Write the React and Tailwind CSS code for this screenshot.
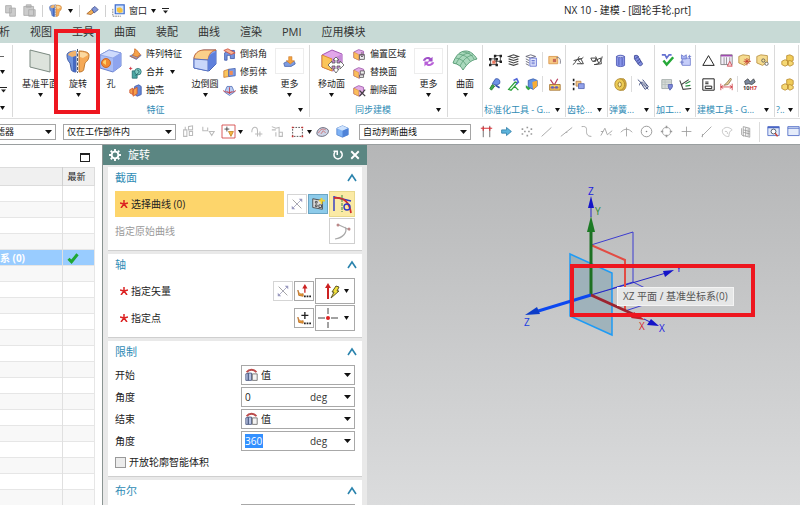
const FONT = "font-['Open_Sans','Noto_Sans_CJK_SC',sans-serif]";

const Svg = ({ size = 14, box = 16, children }) => (
  <svg width={size} height={size} viewBox={`0 0 ${box} ${box}`} fill="none" className="shrink-0 overflow-visible" aria-hidden="true">
    {children}
  </svg>
);

const Arrow = ({ wide }) => (
  <svg width={wide ? 7 : 5} height="4" viewBox="0 0 6 4" preserveAspectRatio="none" className="shrink-0" aria-hidden="true">
    <path d="M0 0h6L3 4z" fill="#111" />
  </svg>
);

const OverflowArrow = () => (
  <svg width="7" height="6" viewBox="0 0 7 6" className="shrink-0" aria-hidden="true">
    <path d="M0 0h7v1H0zM1 2.5h5L3.500 5.500z" fill="#222" />
  </svg>
);

/* ---------- ribbon drawings ---------- */

const RevolveArt = () => (
  <>
    <path d="M1 6c0-3 5-4 9-4v21c-3 0-5-1-5-4l-1-5c-2-2-3-4-3-8z" fill="#6f93dd" stroke="#4660a8" />
    <path d="M2 6c1-3 4-4 8-4v5L6 8z" fill="#f0b26c" />
    <path d="M10 7v16c-1 0-2 0-3-1V8z" fill="#4568c0" />
    <path d="M13 2c5 0 10 1 10 4 0 5-2 6-4 8l-1 5c0 3-2 4-5 4z" fill="#f5a956" stroke="#c07a32" />
    <path d="M14 3c4 0 7 1 8 3l-5 3-3-1z" fill="#fbd9a0" />
    <path d="M11.500 0v24" stroke="#4c5a70" strokeDasharray="3 1.500" />
  </>
);

const BIG_ART = {
  plane: <path d="M2 1l20 5v17L2 18z" fill="#dde3dc" stroke="#7b8980" />,
  revolve: <RevolveArt />,
  hole: (
    <>
      <path d="M1 6l9-5 12 3v13l-8 6-13-4z" fill="#a9bdf5" stroke="#6b83cf" />
      <path d="M1 6l13 3 8-5-12-3z" fill="#cfdbfd" stroke="#8298dd" strokeWidth=".7" />
      <path d="M14 9v14l8-6V4z" fill="#8ea4ee" />
      <circle cx="7" cy="14" r="4.500" fill="#f28b30" stroke="#c9652c" />
      <path d="M4 14a3 3 0 013-3v5z" fill="#ffd26a" />
    </>
  ),
  edge: (
    <>
      <path d="M1 10c0-5 4-8 10-9h12v14l-7 7-15-3z" fill="#86a3ec" stroke="#4864b4" />
      <path d="M1 10C1 5 5 1 11 1h12c-5 1-7 4-8 10z" fill="#fbd08a" stroke="#d0703c" />
      <path d="M1 10l14 1v11L1 19z" fill="#c9d7fa" stroke="#5873c4" />
      <path d="M15 11c0-5 4-7 8-8v12l-8 7z" fill="#5f80db" />
    </>
  ),
  moveFace: (
    <>
      <path d="M2 6l10-5 10 4v11l-9 6-11-4z" fill="#e2a6ea" stroke="#a355b5" />
      <path d="M2 6l10 4v12L2 18z" fill="#fbc55a" stroke="#db8b32" />
      <path d="M12 10l10-5v11l-9 6z" fill="#c689d8" />
      <path d="M16 8l3 3h-2v3h3v-2l4 4-4 4v-3h-3v3h2l-3 4-3-4h2v-3h-3v3l-4-4 4-4v2h3v-3h-2z" fill="#fff" stroke="#555" strokeWidth=".8" />
    </>
  ),
  surface: (
    <>
      <path d="M0 14C3 6 7 2 13 2c4 0 8 3 11 8-6 1-10 5-14 11-2-4-5-6-10-7z" fill="#a9d8bc" stroke="#5c9f79" />
      <path d="M3 15C6 8 11 4 17 4M7 17c3-6 7-10 13-11M3 9c5 1 8 3 10 7M6 5c5 1 9 3 11 7M10 3c5 0 9 3 11 7" stroke="#5c9f79" strokeWidth=".8" />
    </>
  ),
};

const CubeBase = () => (
  <>
    <path d="M1 5l6-3 6 2v7l-5 4-7-3z" fill="#e2abe6" stroke="#9a55a8" />
    <path d="M1 5l6 3v7l-6-3z" fill="#fbbd5c" stroke="#c98232" strokeWidth=".6" />
  </>
);

const SMALL_ART = {
  pattern: (
    <>
      <path d="M1 10l6-3 8 2-6 5z" fill="#88a5e6" stroke="#5270b8" />
      <path d="M7 1c3 1 4 4 7 7l-4 3-6-2c3-2 3-5 3-8z" fill="#f5a24a" stroke="#cb6b28" />
      <path d="M1 10l8 3 5-4" stroke="#d26f32" />
    </>
  ),
  unite: (
    <>
      <path d="M4 6h6v9H4z" fill="#4aa8a4" stroke="#256c70" />
      <circle cx="11" cy="7" r="4" fill="#7dcac2" stroke="#256c70" />
      <path d="M10 5a2 2 0 012 3l-4 4" stroke="#205b60" />
      <path d="M0 3h4M2 1v4" stroke="#d2303c" />
    </>
  ),
  shell: (
    <>
      <path d="M7 3l5-2 3 2v10l-5 2-4-3z" fill="#6587da" stroke="#3c58a5" />
      <path d="M1 7l4-2v8l-4-2zM5 7l5-3v8l-5 3z" fill="#f7a04b" stroke="#cc5832" />
    </>
  ),
  chamfer: (
    <>
      <path d="M2 6l5-3h7v10H9V9H5v6H2z" fill="#7594df" stroke="#3d58a8" />
      <path d="M1 3l9 5 5-2-9-5z" fill="#f6b494" stroke="#cc4d3d" />
    </>
  ),
  trim: (
    <>
      <path d="M1 6l6-2v9l-6 1z" fill="#fac55c" stroke="#cc7a35" />
      <path d="M7 4l8-1v9l-8 1z" fill="#7e9ce6" stroke="#4461ae" />
      <path d="M8 6h4v5H8z" fill="#f08c54" />
    </>
  ),
  draft: (
    <>
      <path d="M5 3h6l3 7-6 4-6-4z" fill="#b9ccf5" stroke="#5570b5" />
      <path d="M0 8c3 3 13 3 16 0M8 4v8M5 9l3 3 3-3" stroke="#c03c44" />
    </>
  ),
  offset: (
    <>
      <CubeBase />
      <path d="M8 8h6v6H8zM11 5v6M9 9l2 2 2-2" fill="#eee" stroke="#555" />
    </>
  ),
  replace: (
    <>
      <CubeBase />
      <path d="M9 6h5v4H9zM8 11h5v3H8z" fill="#eee" stroke="#555" />
    </>
  ),
  remove: (
    <>
      <CubeBase />
      <path d="M8 8l7 7M15 7l-7 8" stroke="#444" strokeWidth="1.500" />
    </>
  ),
  moreOrange: (
    <>
      <path d="M1 10l4-2h9l1 3-5 3H2z" fill="#7e9ce0" stroke="#4a66ae" />
      <path d="M7 2h4v5h3l-5 4-5-4h3z" fill="#f5a33c" stroke="#c8762a" strokeWidth=".7" />
    </>
  ),
  morePurple: (
    <>
      <path d="M1 7c1-5 8-6 10-3l2-2v6H7l2-2C7 4 5 5 4 7z" fill="#a050c8" />
      <path d="M15 9c-1 5-8 6-10 3l-2 2V8h6l-2 2c2 2 4 1 5-1z" fill="#b860d8" />
    </>
  ),
};

const TOOL_ART = {
  nodes: (
    <>
      <path d="M2 6h7v7H2zM7 2h7v7H7z" stroke="#333" />
      <path d="M0 5h3v3H0zM8 5h3v3H8zM0 12h3v3H0zM8 12h3v3H8zM6 1h3v3H6zM13 1h3v3h-3zM13 8h3v3h-3z" fill="#222" />
      <path d="M4 8h4v4H4z" fill="#e8745a" />
    </>
  ),
  layers: <path d="M2 3l6-2 6 2-6 2zM2 6l6 2 6-2M2 9l6 2 6-2M2 12l6 2 6-2" stroke="#444" strokeWidth="1.300" />,
  sheets: (
    <>
      <path d="M1 3l6-2 6 2-6 2zM1 6l4 2M1 9l4 2M1 12l4 2" stroke="#556" />
      <path d="M6 5h8v10H6z" fill="#e4e8fd" stroke="#5765cb" />
      <path d="M8 8h4M8 10h4M8 12h4" stroke="#5765cb" />
    </>
  ),
  tag: (
    <>
      <path d="M1 3h11v9H1z" fill="#f7c983" stroke="#d79348" />
      <path d="M10 5c4-2 6 1 5 7" stroke="#667" />
      <path d="M6 6h4v4H6z" fill="#c86a58" />
    </>
  ),
  wrench: (
    <>
      <path d="M8 1c5-1 6 3 5 6l-4 2-5-2z" fill="#6f93e6" stroke="#3450a5" />
      <path d="M4 8l3 2-4 5-2-2z" fill="#41ad4b" stroke="#246b30" />
      <path d="M8 9l5 3" stroke="#3450a5" strokeWidth="2" />
    </>
  ),
  wrenchPen: (
    <>
      <path d="M2 14l8-9 3 1-8 9zM9 10l5 5" fill="#fff" stroke="#2ba03a" strokeWidth="1.500" />
      <path d="M8 3l4-2 2 4-3 3" stroke="#5568d8" strokeWidth="2" />
    </>
  ),
  wrenchCube: (
    <>
      <path d="M4 3l6-2 5 2v7l-5 4-6-3z" fill="#6294e6" stroke="#355aa8" />
      <path d="M9 5l6-2v7l-5 4z" fill="#f8ae36" />
      <path d="M1 9l6 4-3 2-3-3z" fill="#36a845" />
    </>
  ),
  toolbox: (
    <>
      <path d="M2 8h13v7H2z" fill="#f4ce62" stroke="#a06a28" />
      <path d="M3 2l4 6M12 1L8 8M3 12h10" stroke="#b73c5b" strokeWidth="1.500" />
      <path d="M4 10h3v3H4zM9 10h3v3H9z" fill="#5564c8" />
    </>
  ),
  gearA: <path d="M1 13c3-1 3-4 5-6 3-2 6 0 8-3M2 8l9-2 3 6H6M9 3c-3 3-1 6 3 9" stroke="#444" strokeWidth="1.200" />,
  gearB: <path d="M1 5h6v4H3zM5 13c6 0 9-4 10-10M4 9l9-4 1 7-8 1M7 3l4 9" stroke="#444" strokeWidth="1.200" />,
  gearList: (
    <>
      <path d="M2 1v3M2 6v3M2 12v3" stroke="#222" strokeWidth="2" />
      <path d="M5 4h6v6H5z" fill="#f3c98a" stroke="#b98045" />
      <path d="M8 7h7v6H8z" fill="#93a2ea" stroke="#5464b4" />
    </>
  ),
  cylinder: <path d="M3 3c2-2 8-2 10 0v11c-2 2-8 2-10 0zM3 3c2 2 8 2 10 0M6 5v9M10 5v9" fill="#8794e8" stroke="#4a55b0" />,
  spring: <path d="M3 2c3-1 5 0 5 2l5 8c-1 3-4 3-5 1L3 6zM4 6l4-3M6 9l4-3M7 12l4-3" fill="#7e8bde" stroke="#38428f" />,
  torus: (
    <>
      <path d="M7 1h5c4 3 4 11 0 14H7z" fill="#d8b040" stroke="#a8812a" />
      <ellipse cx="7" cy="8" rx="6" ry="7" fill="#eccb55" stroke="#a8812a" />
      <ellipse cx="7" cy="8" rx="2" ry="3" fill="#fff2b8" stroke="#8a6a20" />
    </>
  ),
  springCut: <path d="M1 2l13 12M3 9c0-3 3-5 5-3s3 5 5 3M4 5l6 9 4-3-7-9" stroke="#445080" strokeWidth="1.200" />,
  check: (
    <>
      <path d="M1 1h4l2 4 3-4h3" stroke="#6470d0" strokeWidth="2" />
      <path d="M3 8l4 5 8-9" stroke="#26a838" strokeWidth="3" />
    </>
  ),
  parts: (
    <>
      <path d="M4 5h10v9H4z" fill="#c5cdf9" stroke="#7480cf" />
      <path d="M3 1l3 2 3-2v5H3z" fill="#a9b5f3" stroke="#6c79cb" />
      <path d="M11 3h4M13 1v5M1 10h5M3 8v5" stroke="#6c79cb" />
    </>
  ),
  sheetPin: (
    <>
      <path d="M1 2h12v11H1z" fill="#d6dbd8" stroke="#9aa4a1" />
      <path d="M1 5h12M1 8h8M5 2v11" stroke="#b8c0bd" />
      <path d="M9 8h5v3l-3 4-2-4z" fill="#7d88d8" stroke="#515cb0" />
    </>
  ),
  axes: (
    <>
      <path d="M1 3l4 11 10-1M5 14l-2-6 9-6" stroke="#444" strokeWidth="1.300" />
      <path d="M8 7l6-3M8 10l6-1" stroke="#2c9146" strokeWidth="1.500" />
    </>
  ),
  triangle: <path d="M8 2l7 12H1z" stroke="#222" strokeWidth="1.200" />,
  tableRed: (
    <>
      <path d="M1 1h14v12H1z" fill="#f5f0fa" stroke="#777" />
      <path d="M1 2h14" stroke="#a04ab0" strokeWidth="2" />
      <path d="M5 4v9M8 4v9M12 4v9" stroke="#888" />
      <path d="M12 9l3 6H9z" fill="#fbd5d8" stroke="#d04550" />
    </>
  ),
  boxStar: (
    <>
      <path d="M1 3l5-2 8 1v8l-6 4-7-3z" fill="#f6dc90" stroke="#b58d3c" />
      <path d="M11 5v9M7 9h9M8 6l6 6M14 6l-6 6" stroke="#c2382f" />
    </>
  ),
  boxGear: (
    <>
      <path d="M1 3l5-2 8 1v8l-6 4-7-3z" fill="#f6dc90" stroke="#b58d3c" />
      <circle cx="9" cy="8" r="2" stroke="#555" />
      <circle cx="13" cy="12" r="2" fill="#fff" stroke="#555" />
    </>
  ),
  frame: <path d="M1 1h14v14H1zM4 10h8v3H4zM4 5h4M4 7h4" stroke="#222" strokeWidth="1.200" />,
  dimension: (
    <>
      <path d="M1 7v8M15 7v8M1 11h14M4 9l-3 2 3 2M12 9l3 2-3 2" stroke="#cf3a40" />
      <path d="M13 0L9 5l-4 4 5-1 4-6z" fill="#e9cf92" stroke="#8a7750" />
    </>
  ),
  fit: (
    <>
      <path d="M2 4l4-3 3 4 4-4 2 4-4 3-4-1-4 1z" fill="#7c8aa0" stroke="#444" />
      <text x="0" y="15" fontSize="7" fontWeight="700" fill="#333">10<tspan fill="#c33">H7</tspan></text>
    </>
  ),
  gold: (
    <>
      <path d="M7 2l4-1 4 2v5l-4 2-4-2z" fill="#f0cb58" stroke="#b98a2c" />
      <path d="M1 9l4-2 4 2v4l-4 2-4-2zM8 9l3-1 4 2v3l-4 2-3-2z" fill="#f6d873" stroke="#b98a2c" />
    </>
  ),
};

/* ---------- selection bar drawings ---------- */

const BAR_ART = {
  cubesGrey: <path d="M2 6h4v8H2zM8 2l5-1v5H8zM9 8h4v5H9zM4 2v4" stroke="#bbb" strokeWidth="1.300" />,
  filterGrey: <path d="M1 2v5h6V3M9 8h6l-3 5z" stroke="#bbb" strokeWidth="1.300" />,
  plusBox: (
    <>
      <path d="M0 0h16v16H0z" fill="#fff" stroke="#d23a3a" />
      <path d="M3 5h6M6 2v6" stroke="#333" />
      <path d="M8 8h6l-3 6z" fill="#f4b642" stroke="#c38325" />
    </>
  ),
  curveGrey: <path d="M1 9c0-8 7-8 7-2v7M5 11h9M11 8v6" stroke="#bbb" strokeWidth="1.300" />,
  treeGrey: <path d="M1 2l5 2 4-1v6M6 9v5M10 9h4v5h-4zM1 6h5" stroke="#bbb" strokeWidth="1.300" />,
  dashedRect: (
    <>
      <path d="M2 3h12v11H2z" stroke="#333" strokeDasharray="2 1.500" />
      <path d="M1 2h2v2H1zM13 2h2v2h-2zM1 13h2v2H1zM13 13h2v2h-2z" fill="#c33" />
    </>
  ),
  dome: (
    <>
      <path d="M1 10c1-7 9-9 14-4 1 3-1 7-7 8-4 0-7-1-7-4z" fill="#cdd5e8" stroke="#556" />
      <path d="M3 10c2-5 6-6 9-4M6 11l3-4 3 3" stroke="#c66" />
    </>
  ),
  cubeBlue: (
    <>
      <path d="M1 4l7-3 7 3v8l-7 3-7-3z" fill="#7eb2f5" stroke="#5685cf" />
      <path d="M1 4l7 3 7-3-7-3z" fill="#cfe3fd" />
      <path d="M8 7v8l7-3V4z" fill="#4f83d8" />
    </>
  ),
  snap: (
    <>
      <path d="M4 1v14M12 1v14" stroke="#555" />
      <path d="M1 4h14M4 2v5M12 2v5" stroke="#d8363c" strokeWidth="1.500" />
    </>
  ),
  arrowBlue: <path d="M2 6h6V3l6 5-6 5v-3H2z" fill="#5db4dc" stroke="#2c7ca8" />,
  points: <path d="M2 5h2M8 3h2M13 5h2M5 8h2M10 8h2M2 11h2M8 13h2M13 11h2" stroke="#999" strokeWidth="2" />,
  line: <path d="M2 14L14 3" stroke="#999" />,
  lineMid: <path d="M1 14L15 3M7 9h2" stroke="#999" />,
  hook: <path d="M2 2c7-1 6 3 6 6s1 6 6 6" stroke="#999" />,
  zig: <path d="M1 13l5-9 3 8 6-5M1 8h3M12 12h2" stroke="#999" />,
  arc: <path d="M1 9c4-5 10-5 14 0M8 3v11" stroke="#999" />,
  circleDot: (
    <>
      <circle cx="8" cy="8" r="6.500" stroke="#888" />
      <circle cx="8" cy="8" r="1" fill="#888" />
    </>
  ),
  circleTick: (
    <>
      <circle cx="8" cy="8" r="5" stroke="#999" />
      <path d="M8 1v3M8 12v3M1 8h3M12 8h3" stroke="#999" strokeWidth="2" />
    </>
  ),
  plus: <path d="M8 2v12M2 8h12" stroke="#999" />,
  slash: <path d="M2 14L14 2M3 11v4" stroke="#999" />,
  face: <path d="M3 6c4-5 9-3 12 0-3 1-4 4-4 8-4 1-9-3-8-8zM6 8c2-1 4 1 3 3" stroke="#bbb" />,
  grid: <path d="M4 2l8 2v11l-8-2zM4 6l8 2M4 9l8 2M7 3v11M10 4v10M2 4v8l3 2" stroke="#999" />,
  zoomWin: (
    <>
      <path d="M1 2h14v11H1z" fill="#e5ecfa" stroke="#4865c4" />
      <path d="M1 3h14" stroke="#4865c4" strokeWidth="2" />
      <circle cx="8" cy="8" r="3" fill="#fff" stroke="#345" />
      <path d="M10 10l3 4" stroke="#c43" strokeWidth="2" />
    </>
  ),
  window: <path d="M1 2h14v11H1zM1 4h14" fill="#e5ecfa" stroke="#4865c4" />,
};

/* ---------- ribbon ---------- */

const BigButton = ({ art, label, width, menu = true, boxed }) => (
  <button className={`flex flex-col items-center shrink-0 pt-[3px] ${width}`}>
    <span className={`flex items-center justify-center h-[26px] ${boxed ? 'w-[29px] border border-[#ededed]' : ''}`}>
      {boxed ? <Svg size={13}>{SMALL_ART[art]}</Svg> : <Svg size={24} box={24}>{BIG_ART[art]}</Svg>}
    </span>
    <span className="mt-[3px] mb-[2px] leading-[14px] whitespace-nowrap">{label}</span>
    {menu && <Arrow />}
  </button>
);

const SmallColumn = ({ items, width }) => (
  <div className={`flex flex-col shrink-0 ${width}`}>
    {items.map(([art, label, menu]) => (
      <button key={art} className="flex items-center gap-1 h-[18px] whitespace-nowrap">
        <Svg size={13}>{SMALL_ART[art]}</Svg>
        <span>{label}</span>
        {menu && <span className="ml-[2px] flex"><Arrow /></span>}
      </button>
    ))}
  </div>
);

const Group = ({ width, label, menu, children }) => (
  <section className={`flex flex-col shrink-0 border-r border-[#dadada] ${width}`}>
    <div className="flex h-[59px]">{children}</div>
    <div className="flex items-center h-[14px] pr-[6px] text-[#2f8bb5] whitespace-nowrap">
      <span className="flex-1 text-center">{label}</span>
      {menu && <Arrow />}
    </div>
  </section>
);

const TOOL_GROUPS = [
  { label: '标准化工具 - G...', width: 'w-[83px]', rows: [['nodes', 'layers', 'sheets', '|', 'tag'], ['wrench', 'wrenchPen', 'wrenchCube', '|', 'toolbox']] },
  { label: '齿轮...', width: 'w-[42px]', rows: [['gearA', 'gearB'], ['gearList']] },
  { label: '弹簧...', width: 'w-[47px]', rows: [['cylinder', 'spring'], ['torus', '|', 'springCut']] },
  { label: '加工...', width: 'w-[41px]', rows: [['check', 'parts'], ['sheetPin', 'axes']] },
  { label: '建模工具 - G...', width: 'w-[79px]', rows: [['triangle', 'tableRed', 'boxStar', 'boxGear'], ['frame', 'dimension', '|', 'fit']] },
  { label: '?..', width: 'w-[24px]', rows: [['gold'], ['gold']] },
];

const ToolGroup = ({ label, width, rows }) => (
  <section className={`flex flex-col shrink-0 border-r border-[#dadada] overflow-hidden ${width}`}>
    <div className="flex flex-col h-[59px] pt-[3px] pl-[3px]">
      {rows.map((row, r) => (
        <div key={r} className="flex items-center h-6">
          {row.map((art, i) =>
            art === '|' ? (
              <span key={i} className="w-px h-4 mx-[2px] bg-[#dcdcdc]" />
            ) : (
              <button key={i} aria-label={art} className="flex justify-center w-[18px]">
                <Svg size={13}>{TOOL_ART[art]}</Svg>
              </button>
            )
          )}
        </div>
      ))}
    </div>
    <div className="flex items-center justify-between h-[14px] pl-px pr-[5px] text-[#2f8bb5] whitespace-nowrap">
      <span>{label}</span>
      <Arrow />
    </div>
  </section>
);

const Ribbon = () => (
  <div className="flex h-[75px] shrink-0 pt-[2px] pb-px overflow-hidden text-[9px] text-[#222]">
    <div className="flex flex-col shrink-0 gap-[13px] w-[13px] pt-[11px] border-r border-[#dadada]">
      <span className="w-1 h-px bg-[#666]" />
      <Arrow />
      <OverflowArrow />
      <Arrow />
    </div>
    <Group width="w-[297px]" label="特征" menu>
      <BigButton art="plane" label="基准平面" width="w-[50px] pl-1" />
      <BigButton art="revolve" label="旋转" width="w-[30px]" />
      <BigButton art="hole" label="孔" width="w-[36px]" menu={false} />
      <SmallColumn width="w-[58px]" items={[['pattern', '阵列特征'], ['unite', '合并', true], ['shell', '抽壳']]} />
      <BigButton art="edge" label="边倒圆" width="w-[36px]" />
      <SmallColumn width="w-[52px]" items={[['chamfer', '倒斜角'], ['trim', '修剪体'], ['draft', '拔模']]} />
      <BigButton art="moreOrange" label="更多" width="w-[29px]" boxed />
    </Group>
    <Group width="w-[138px]" label="同步建模" menu>
      <BigButton art="moveFace" label="移动面" width="w-[43px]" />
      <SmallColumn width="w-[61px]" items={[['offset', '偏置区域'], ['replace', '替换面'], ['remove', '删除面']]} />
      <BigButton art="morePurple" label="更多" width="w-[29px]" boxed />
    </Group>
    <Group width="w-[35px]">
      <BigButton art="surface" label="曲面" width="w-[34px]" />
    </Group>
    {TOOL_GROUPS.map((g) => <ToolGroup key={g.label} {...g} />)}
  </div>
);

/* ---------- top bars ---------- */

const Divider = () => <span className="w-px h-3 bg-[#d0d0d0]" />;

const TitleBar = () => (
  <header className="flex items-center h-[21px] shrink-0 text-[9px] text-[#222]">
    <div className="flex items-center gap-[6px] pl-1 w-[564px]">
      <Svg size={13}><path d="M2 2h7v9H2zM7 5h7v10H7z" fill="#ccc" stroke="#aaa" /></Svg>
      <Svg size={13}><path d="M1 3h12v11H1zM4 1h6v3H4zM7 7h8v8H7z" fill="#ccc" stroke="#aaa" /></Svg>
      <Divider />
      <Svg size={13} box={24}><RevolveArt /></Svg>
      <Arrow />
      <Divider />
      <Svg size={13}>
        <path d="M1 12l6-5 3 3-4 3z" fill="#f3b155" stroke="#a5622c" />
        <path d="M7 6l4-3 4 4-5 4z" fill="#8094d6" stroke="#44528f" />
      </Svg>
      <Divider />
      <button className="flex items-center gap-1 whitespace-nowrap">
        <Svg size={13}>
          <path d="M1 6v9h10" stroke="#666" strokeDasharray="2 1" />
          <path d="M4 1h11v11H4z" fill="#cfe0fb" stroke="#3d6ccd" strokeWidth="1.500" />
          <path d="M6 5l4-1 3 2v4l-4 1-3-2z" fill="#f5c23c" />
        </Svg>
        窗口
        <Arrow />
      </button>
      <OverflowArrow />
    </div>
    <h1 className="text-[10px] whitespace-nowrap">NX 10 - 建模 - [圆轮手轮.prt]</h1>
  </header>
);

const MENU = ['分析', '视图', '工具', '曲面', '装配', '曲线', '渲染', 'PMI', '应用模块'];

const MenuBar = () => (
  <nav className="shrink-0 h-[22px] overflow-hidden bg-[#c8dad6] text-[11px] text-[#333]">
    <div className="flex items-center gap-5 h-full -ml-3">
      {MENU.map((m) => <button key={m} className="shrink-0">{m}</button>)}
    </div>
  </nav>
);

const BarSelect = ({ value, width, label }) => (
  <div className={`relative shrink-0 ${width}`}>
    <select aria-label={label} className="block appearance-none w-full h-4 pl-[3px] border border-[#a5a5a5] bg-white leading-[14px] text-[#111]">
      <option>{value}</option>
    </select>
    <span className="absolute right-1 inset-y-0 flex items-center pointer-events-none"><Arrow wide /></span>
  </div>
);

const BarIcon = ({ art }) => (
  <button aria-label={art} className="flex justify-center shrink-0 w-5"><Svg size={13}>{BAR_ART[art]}</Svg></button>
);

const SNAP_ICONS = ['snap', 'arrowBlue', 'points', 'line', 'lineMid', 'hook', 'zig', 'arc', 'circleDot', 'circleTick', 'plus', 'slash', 'face', 'grid'];

const SelectionBar = () => (
  <div className="flex items-center shrink-0 h-[27px] border-t border-[#dedede] border-b border-b-[#9a9fa0] overflow-hidden text-[9px]">
    <div className="flex justify-end shrink-0 w-[56px] overflow-hidden">
      <BarSelect label="过滤器" value="无选择过滤器" width="w-[100px]" />
    </div>
    <div className="flex items-center shrink-0 w-[303px] pl-[7px]">
      <BarSelect label="范围" value="仅在工作部件内" width="w-[113px]" />
      <span className="w-[2px]" />
      <BarIcon art="cubesGrey" />
      <BarIcon art="filterGrey" />
      <BarIcon art="plusBox" />
      <Arrow />
      <span className="w-1" />
      <BarIcon art="curveGrey" />
      <BarIcon art="treeGrey" />
      <BarIcon art="dashedRect" />
      <Arrow />
      <BarIcon art="dome" />
      <BarIcon art="cubeBlue" />
    </div>
    <BarSelect label="曲线规则" value="自动判断曲线" width="w-[112px]" />
    <div className="flex items-center shrink-0 pl-[5px]">
      {SNAP_ICONS.map((a) => <BarIcon key={a} art={a} />)}
      <span className="w-px h-5 mx-[3px] bg-[#dcdcdc]" />
      <BarIcon art="zoomWin" />
      <BarIcon art="window" />
    </div>
  </div>
);

/* ---------- part navigator ---------- */

const ROWS = Array.from({ length: 20 }, (_, i) => (i === 4 ? '基准坐标系 (0)' : ''));

const Navigator = () => (
  <aside className="flex flex-col shrink-0 w-[102px] bg-white text-[9px] overflow-hidden">
    <div className="flex justify-end items-end h-[22px] shrink-0 pr-3 pb-[5px]">
      <button aria-label="最大化" className="w-[10px] h-[9px] border border-t-2 border-[#222]" />
    </div>
    <table className="w-[95px] table-fixed border-collapse">
      <thead>
        <tr className="h-[18px] bg-[#f0f0f0] border border-l-0 border-[#dcdcdc]">
          <th className="w-[62px] border-r border-[#d0d0d0]" />
          <th className="pl-[5px] text-left font-normal text-[#222]">最新</th>
        </tr>
      </thead>
      <tbody>
        {ROWS.map((name, i) => (
          <tr key={i} className={`h-4 border border-l-0 border-[#e6e6e6] ${name ? 'bg-[#99ccff]' : i % 2 ? 'bg-[#f8f8f8]' : 'bg-white'}`}>
            <td className="p-0 border-r border-[#e0e0e0]">
              <div className="flex justify-end w-[61px] pr-[36px] overflow-hidden whitespace-nowrap text-[10px] font-bold leading-[14px] text-white">{name}</div>
            </td>
            <td className="p-0 pl-1">
              {name && <Svg size={12}><path d="M2 9l4 4 8-10" stroke="#1fa834" strokeWidth="4" /></Svg>}
            </td>
          </tr>
        ))}
      </tbody>
    </table>
  </aside>
);

/* ---------- revolve dialog ---------- */

const Section = ({ title, height, children }) => (
  <section className={`shrink-0 px-[7px] bg-white border-b border-[#cfcfcf] ${height}`}>
    <div className="flex items-center justify-between h-[23px]">
      <h3 className="text-[11px] text-[#2f8bb5]">{title}</h3>
      <button aria-label="折叠">
        <Svg size={10} box={10}><path d="M3 7l4-6 4 6" stroke="#2a83ad" strokeWidth="1.600" /></Svg>
      </button>
    </div>
    {children}
  </section>
);

const Star = () => (
  <svg width="8" height="8" viewBox="0 0 8 8" className="shrink-0" aria-hidden="true">
    <path d="M4 0v4M4 4L0 3M4 4l4-1M4 4L1 8M4 4l3 4" stroke="#dc2222" strokeWidth="1.500" />
  </svg>
);

const Reverse = () => (
  <button aria-label="反向" className="flex items-center justify-center shrink-0 w-5 h-5 border border-[#d5d5d5] bg-white">
    <Svg>
      <path d="M3 3l10 10" stroke="#999" />
      <path d="M3 13L13 3" stroke="#a5a5bd" />
      <path d="M14 2v4l-4-4zM2 14v-4l4 4z" fill="#9a9ac0" />
    </Svg>
  </button>
);

const IconButton = ({ label, children }) => (
  <button aria-label={label} className="flex items-center justify-center shrink-0 w-5 h-5 border border-[#a9a9a9] bg-white">
    <Svg>{children}</Svg>
  </button>
);

const ValueSelect = ({ id }) => (
  <div className="relative w-[114px] h-5">
    <select id={id} aria-label="值类型" className="block appearance-none w-full h-5 pl-[19px] border border-[#a8a8a8] bg-white text-[10px] leading-[18px] text-[#222]">
      <option>值</option>
    </select>
    <span className="absolute left-[4px] inset-y-0 flex items-center pointer-events-none">
      <Svg size={13}>
        <path d="M1 6l3-1v9H1zM4 5h4v9H4z" fill="#b9c4e4" stroke="#46557c" />
        <path d="M9 6h6v8H9z" fill="#f3f3f3" stroke="#666" />
        <path d="M2 4c3-4 9-4 12 0" stroke="#bb4c4c" strokeWidth="2.500" />
      </Svg>
    </span>
    <span className="absolute right-1 inset-y-0 flex items-center pointer-events-none"><Arrow wide /></span>
  </div>
);

const AngleInput = ({ id, value, selected }) => (
  <div className="relative flex items-center w-[114px] h-5 pl-[3px] border border-[#a8a8a8] bg-white">
    <input
      id={id}
      defaultValue={value}
      className={`w-[18px] h-[14px] text-[10px] leading-[14px] outline-none ${selected ? 'bg-[#3390ff] text-white' : 'text-[#222]'}`}
    />
    <select aria-label="单位" className="appearance-none h-[18px] ml-auto w-[44px] text-[10px] leading-[18px] text-[#333]">
      <option>deg</option>
    </select>
    <span className="absolute right-[3px] inset-y-0 flex items-center pointer-events-none"><Arrow wide /></span>
  </div>
);

const LimitRow = ({ id, label, children }) => (
  <div className="flex items-center justify-between h-[22px]">
    <label htmlFor={id}>{label}</label>
    {children}
  </div>
);

const Dialog = () => (
  <div className="flex flex-col shrink-0 w-[265px] border-l border-[#8a9492] bg-[#e9e9e9] text-[10px] text-[#222] overflow-hidden">
    <div className="flex items-center h-[20px] shrink-0 px-[6px] bg-[#5b8682] text-white">
      <Svg size={12}>
        <circle cx="8" cy="8" r="4.500" stroke="#fff" strokeWidth="2.500" />
        <path d="M8 0v3M8 13v3M0 8h3M13 8h3M2.300 2.300l2 2M11.700 11.700l2 2M13.700 2.300l-2 2M4.300 11.700l-2 2" stroke="#fff" strokeWidth="2.500" />
      </Svg>
      <h2 className="ml-[7px] text-[11px]">旋转</h2>
      <div className="flex items-center gap-[5px] ml-auto">
        <button aria-label="重置">
          <Svg size={12}><path d="M11 3a5.500 5.500 0 11-7 1M2 3h5v5" stroke="#fff" strokeWidth="2" /></Svg>
        </button>
        <button aria-label="关闭">
          <Svg size={12}><path d="M3 3l10 10M13 3L3 13" stroke="#fff" strokeWidth="2.500" /></Svg>
        </button>
      </div>
    </div>

    <div className="flex flex-col flex-1 gap-[3px] px-[5px] pt-[2px]">
      <Section title="截面" height="h-[84px]">
        <div className="flex items-center mt-px">
          <div className="flex flex-1 items-center gap-[3px] h-[26px] pl-[5px] bg-[#fdd56b]"><Star /><span>选择曲线 (0)</span></div>
          <div className="flex items-center gap-px pl-[3px]">
            <Reverse />
            <button aria-label="绘制截面" className="flex items-center justify-center w-5 h-5 border border-[#6aa5c4] bg-[#8dcbea]">
              <Svg>
                <path d="M2 2l11 2v10L2 12z" fill="#ddd" stroke="#444" />
                <path d="M5 5h2v2H5zM5 9h2v2H5zM9 9h3v3H9z" stroke="#444" />
                <path d="M12 1v7M9 4h7" stroke="#f0d432" strokeWidth="2" />
              </Svg>
            </button>
            <button aria-label="曲线" className="flex items-center justify-center w-[26px] h-[26px] border border-[#e8d88c] bg-[#fbeaa5]">
              <Svg size={22} box={22}>
                <path d="M3 3v15M3 4l17 4" stroke="#3038c4" strokeWidth="1.400" />
                <path d="M3 5c8-1 15 2 17 15" stroke="#d22c2c" strokeWidth="1.800" />
                <path d="M11 2v17" stroke="#3c8a48" strokeDasharray="3 1" />
                <circle cx="16" cy="14" r="3" stroke="#3038c4" strokeWidth="1.400" />
              </Svg>
            </button>
          </div>
        </div>
        <div className="flex items-center justify-between h-[28px] text-[#999]">
          <span>指定原始曲线</span>
          <button aria-label="原始曲线" className="flex items-center justify-center w-[26px] h-[26px] border border-[#cfcfcf]">
            <Svg size={20} box={20}>
              <path d="M7 4l11 5M13 6c3 5-2 11-10 12" stroke="#aaa" strokeWidth="1.200" />
              <circle cx="6" cy="4" r="1.500" fill="#b88" />
              <circle cx="17" cy="8" r="1.500" fill="#b88" />
            </Svg>
          </button>
        </div>
      </Section>

      <Section title="轴" height="h-[84px]">
        <div className="flex items-center gap-px h-[28px]">
          <div className="flex flex-1 items-center gap-[3px] pl-[5px]"><Star /><span>指定矢量</span></div>
          <Reverse />
          <IconButton label="矢量对话框">
            <path d="M9 2v8" stroke="#c22" strokeWidth="1.500" />
            <path d="M9 0l3 5H6z" fill="#c22" />
            <path d="M1 7c1 4 3 5 6 4v3l-5-1z" fill="#f0a030" stroke="#b9702a" />
            <path d="M8 14h2M11 14h2M14 14h2" stroke="#222" strokeWidth="2" />
          </IconButton>
          <button aria-label="矢量类型" className="flex items-center justify-between w-[40px] h-[26px] pl-[8px] pr-[5px] border border-[#a9a9a9] bg-white">
            <Svg size={16}>
              <path d="M4 3v13" stroke="#c22" strokeWidth="2" />
              <path d="M4 0l3 5H1z" fill="#c22" />
              <path d="M12 3l3 1-2 4h2l-8 7 3-6H8z" fill="#f3e23c" stroke="#5d5628" />
            </Svg>
            <Arrow />
          </button>
        </div>
        <div className="flex items-center gap-px h-[26px]">
          <div className="flex flex-1 items-center gap-[3px] pl-[5px]"><Star /><span>指定点</span></div>
          <IconButton label="点对话框">
            <path d="M9 1v8M5 5h8" stroke="#222" strokeWidth="1.500" />
            <path d="M1 7c1 4 3 5 6 4v3l-5-1z" fill="#f0a030" stroke="#b9702a" />
            <path d="M8 14h2M11 14h2M14 14h2" stroke="#222" strokeWidth="2" />
          </IconButton>
          <button aria-label="点类型" className="flex items-center justify-between w-[40px] h-[26px] pl-[2px] pr-[5px] border border-[#a9a9a9] bg-white">
            <Svg size={20} box={20}>
              <path d="M10 0v6M10 14v6M0 10h7M13 10h7" stroke="#444" />
              <circle cx="10" cy="10" r="2" fill="#d22" />
            </Svg>
            <Arrow />
          </button>
        </div>
      </Section>

      <Section title="限制" height="h-[136px]">
        <LimitRow id="start" label="开始"><ValueSelect id="start" /></LimitRow>
        <LimitRow id="startAngle" label="角度"><AngleInput id="startAngle" value="0" /></LimitRow>
        <LimitRow id="end" label="结束"><ValueSelect id="end" /></LimitRow>
        <LimitRow id="endAngle" label="角度"><AngleInput id="endAngle" value="360" selected /></LimitRow>
        <label className="flex items-center gap-[3px] h-[20px]">
          <input type="checkbox" className="appearance-none w-[11px] h-[11px] border border-[#999] bg-[#ececec]" />
          开放轮廓智能体积
        </label>
      </Section>

      <Section title="布尔" height="h-[84px]">
        <div className="flex justify-end pt-px"><ValueSelect id="boolean" /></div>
      </Section>
    </div>
  </div>
);

/* ---------- graphics window ---------- */

const Viewport = () => (
  <main className="relative flex-1 overflow-hidden bg-linear-to-b from-[#b5b6b7] to-[#dbdcdd]">
    <svg width="433" height="360" viewBox="367 145 433 360" fill="none" className="block" fontSize="10">
      <path d="M591 245l42-13v50l-42 13M633 282l32 16-40 13" stroke="#3c3cd0" />
      <path d="M570 254l42 19v62l-42-19z" fill="#8fa9b5" fillOpacity=".7" stroke="#1e9bf5" strokeWidth="1.500" />
      <path d="M591 295l75-22M591 217v-12" stroke="#2424c8" />
      <path d="M674 270l-11 1 2 6zM591 196l3 12h-6z" fill="#1414c8" />
      <path d="M591 245l34 15v51" stroke="#e24c44" strokeWidth="2" />
      <path d="M591 295v-65" stroke="#1c7022" strokeWidth="3" />
      <path d="M591 216l4 16h-8z" fill="#1c7a24" />
      <path d="M591 295l-56 17" stroke="#0c48f0" strokeWidth="3" />
      <path d="M525 315l12-8 3 7z" fill="#0c3cc8" />
      <path d="M591 295l44 20" stroke="#9c2430" strokeWidth="3" />
      <path d="M645 320l-14-2 3-6z" fill="#c42028" />
      <path d="M644 319l6 3" stroke="#2424c8" />
      <path d="M659 326l-12-1 4-6z" fill="#1414c8" />
      <text x="588" y="195" fill="#1c1ce0">Z</text>
      <text x="595" y="215" fill="#2c8c34">Y</text>
      <text x="676" y="272" fill="#1c1ce0">Y</text>
      <text x="524" y="326" fill="#1c40e0">Z</text>
      <text x="639" y="330" fill="#d42c30">X</text>
      <text x="659" y="332" fill="#1c1ce0">X</text>
    </svg>
    <div role="tooltip" className="absolute left-[250px] top-[142px] flex items-center h-[19px] px-[5px] border border-[#f4f4f4] bg-[#e6e7e7] text-[10px] text-[#555] whitespace-nowrap">
      XZ 平面 / 基准坐标系(0)
    </div>
    <div className="absolute left-[203px] top-[119px] w-[185px] h-[53px] border-4 border-[#ee161f] pointer-events-none" />
  </main>
);

export default function App() {
  return (
    <div className={`relative flex flex-col h-screen overflow-hidden bg-white ${FONT}`}>
      <TitleBar />
      <MenuBar />
      <Ribbon />
      <SelectionBar />
      <div className="flex flex-1 min-h-0">
        <Navigator />
        <Dialog />
        <Viewport />
      </div>
      <div className="absolute left-[54px] top-[29px] w-[46px] h-[85px] border-4 border-[#ee161f] pointer-events-none" />
    </div>
  );
}
